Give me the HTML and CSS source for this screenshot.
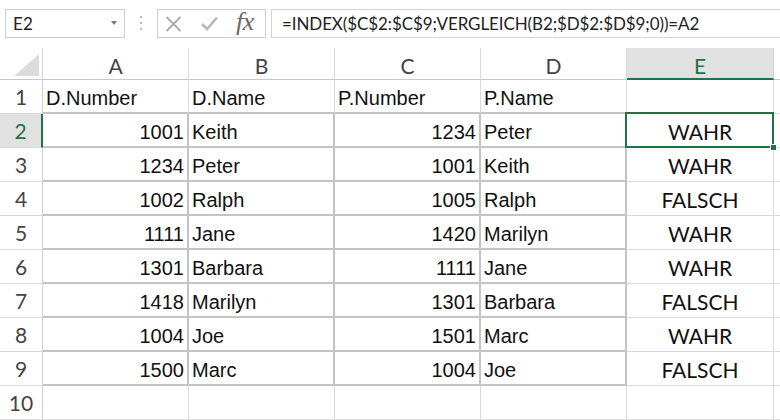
FILE: index.html
```html
<!DOCTYPE html>
<html>
<head>
<meta charset="utf-8">
<link rel="stylesheet" href="styles.css">
</head>
<body>
<div class="app">
  <div class="fbar">
    <div class="namebox"><span class="ref">E2</span><span class="dd"></span></div>
    <div class="grip"><i></i><i></i><i></i></div>
    <div class="fxbox">
      <svg class="ico-x" width="17" height="16" viewBox="0 0 17 16"><path d="M1.5 1 L15.5 15 M15.5 1 L1.5 15" stroke="#ababab" stroke-width="1.8" fill="none"/></svg>
      <svg class="ico-ok" width="17" height="15" viewBox="0 0 17 15"><path d="M1 8 L6 13 L16 1.5" stroke="#b8b8b8" stroke-width="2.6" fill="none"/></svg>
      <span class="fx">fx</span>
    </div>
    <div class="formula">=INDEX($C$2:$C$9;VERGLEICH(B2;$D$2:$D$9;0))=A2</div>
  </div>
  <div class="sheet">
    <div class="corner"><span class="tri"></span></div>
    <div class="ch">A</div><div class="ch">B</div><div class="ch">C</div><div class="ch">D</div><div class="ch ch-sel">E</div><div class="ch ch-last"></div>

    <div class="rh">1</div>
    <div class="c t top">D.Number</div><div class="c t top">D.Name</div><div class="c t top">P.Number</div><div class="c t top">P.Name</div><div class="c"></div><div class="c last"></div>

    <div class="rh rh-sel">2</div>
    <div class="c n b">1001</div><div class="c t b">Keith</div><div class="c n b">1234</div><div class="c t b">Peter</div><div class="c v sel">WAHR<span class="handle"></span></div><div class="c last"></div>

    <div class="rh">3</div>
    <div class="c n b">1234</div><div class="c t b">Peter</div><div class="c n b">1001</div><div class="c t b">Keith</div><div class="c v">WAHR</div><div class="c last"></div>

    <div class="rh">4</div>
    <div class="c n b">1002</div><div class="c t b">Ralph</div><div class="c n b">1005</div><div class="c t b">Ralph</div><div class="c v">FALSCH</div><div class="c last"></div>

    <div class="rh">5</div>
    <div class="c n b">1111</div><div class="c t b">Jane</div><div class="c n b">1420</div><div class="c t b">Marilyn</div><div class="c v">WAHR</div><div class="c last"></div>

    <div class="rh">6</div>
    <div class="c n b">1301</div><div class="c t b">Barbara</div><div class="c n b">1111</div><div class="c t b">Jane</div><div class="c v">WAHR</div><div class="c last"></div>

    <div class="rh">7</div>
    <div class="c n b">1418</div><div class="c t b">Marilyn</div><div class="c n b">1301</div><div class="c t b">Barbara</div><div class="c v">FALSCH</div><div class="c last"></div>

    <div class="rh">8</div>
    <div class="c n b">1004</div><div class="c t b">Joe</div><div class="c n b">1501</div><div class="c t b">Marc</div><div class="c v">WAHR</div><div class="c last"></div>

    <div class="rh">9</div>
    <div class="c n b">1500</div><div class="c t b">Marc</div><div class="c n b">1004</div><div class="c t b">Joe</div><div class="c v">FALSCH</div><div class="c last"></div>

    <div class="rh">10</div>
    <div class="c"></div><div class="c"></div><div class="c"></div><div class="c"></div><div class="c"></div><div class="c last"></div>
  </div>
</div>
</body>
</html>
```
FILE: styles.css
```css
* { box-sizing: border-box; }
html, body { margin: 0; padding: 0; background: #fff; }
body { width: 780px; height: 420px; overflow: hidden; }

.app { width: 780px; height: 420px; overflow: hidden; }

/* formula bar */
.fbar {
  display: flex;
  align-items: stretch;
  height: 38px;
  padding-top: 9px;
  font-family: Lato, "Open Sans", sans-serif;
}
.namebox {
  margin-left: 5px;
  width: 120px;
  border: 1px solid #cfcfcf;
  display: flex;
  align-items: center;
  padding-left: 7px;
  position: relative;
}
.ref { font-size: 17px; color: #222; letter-spacing: 0.2px; }
.dd {
  position: absolute;
  right: 7px;
  top: 11px;
  width: 0; height: 0;
  border-left: 3.5px solid transparent;
  border-right: 3.5px solid transparent;
  border-top: 4px solid #7a7a7a;
}
.grip {
  width: 32px;
  display: flex;
  flex-direction: column;
  align-items: center;
  justify-content: center;
  gap: 4px;
  padding-bottom: 2px;
}
.grip i { display: block; width: 2px; height: 2px; background: #b9b9b9; }
.fxbox {
  width: 109px;
  border: 1px solid #cfcfcf;
  display: flex;
  align-items: center;
  padding-left: 7px;
}
.ico-x { margin-right: 19px; }
.ico-ok { margin-right: 18px; }
.fx {
  font-family: "Liberation Serif", serif;
  font-style: italic;
  font-size: 26px;
  color: #686868;
  letter-spacing: -0.5px;
  line-height: 1;
  margin-top: -3px;
}
.formula {
  flex: 1;
  margin-left: 5px;
  border-top: 1px solid #d4d4d4;
  border-bottom: 1px solid #d4d4d4;
  border-left: 1px solid #d4d4d4;
  display: flex;
  align-items: center;
  padding-left: 10px;
  font-size: 17px;
  color: #222;
  white-space: nowrap;
  letter-spacing: -0.1px;
}

/* sheet */
.sheet {
  margin-top: 10px;
  display: grid;
  grid-template-columns: 43px 146px 146px 146px 146px 147px 1fr;
  grid-template-rows: 32px repeat(10, 34px);
}
.corner {
  border-right: 1px solid #d8d8d8;
  border-bottom: 1px solid #c8c8c8;
  display: flex;
  justify-content: flex-end;
  align-items: flex-end;
  padding: 0 3px 3px 0;
}
.tri {
  width: 25px;
  height: 22px;
  background: #dcdcdc;
  clip-path: polygon(100% 0, 100% 100%, 0 100%);
}
.ch {
  border-right: 1px solid #dadada;
  border-bottom: 1px solid #c8c8c8;
  display: flex;
  align-items: center;
  justify-content: center;
  padding-top: 4px;
  font-family: Lato, "Open Sans", sans-serif;
  font-size: 21px;
  color: #444;
}
.ch-sel {
  background: #e1e1e1;
  color: #217346;
  border-bottom: 2px solid #217346;
  border-right-color: #cfcfcf;
}
.ch-last { border-right: none; }

.rh {
  border-right: 1px solid #d0d0d0;
  border-bottom: 1px solid #dadada;
  display: flex;
  align-items: center;
  justify-content: center;
  padding-top: 0;
  font-family: Lato, "Open Sans", sans-serif;
  font-size: 21px;
  color: #444;
}
.rh-sel {
  background: #e1e1e1;
  color: #217346;
  border-right: 2px solid #217346;
}

.c {
  border-right: 1px solid #dadada;
  border-bottom: 1px solid #dadada;
  display: flex;
  align-items: flex-end;
  padding: 0 3px 2px 3px;
  font-family: "Liberation Sans", Arial, sans-serif;
  font-size: 20px;
  line-height: 23px;
  color: #111;
  white-space: nowrap;
  position: relative;
}
.c.last { border-right: none; }
.c.n { justify-content: flex-end; }
.c.t { justify-content: flex-start; }
.c.top { border-bottom: 2px solid #c4c4c4; }
.c.b {
  border-right: 2px solid #c4c4c4;
  border-bottom: 2px solid #c4c4c4;
}
.c.v {
  justify-content: center;
  align-items: center;
  padding: 1px 0 0 0;
  font-family: Lato, "Open Sans", sans-serif;
  font-size: 21px;
}
.sel::after {
  content: "";
  position: absolute;
  left: -2px;
  top: -2px;
  right: -1px;
  bottom: -1px;
  border: 2px solid #217346;
  pointer-events: none;
}
.handle {
  position: absolute;
  right: -4px;
  bottom: -4px;
  width: 7px;
  height: 7px;
  background: #217346;
  border: 1px solid #fff;
  z-index: 2;
}
```
